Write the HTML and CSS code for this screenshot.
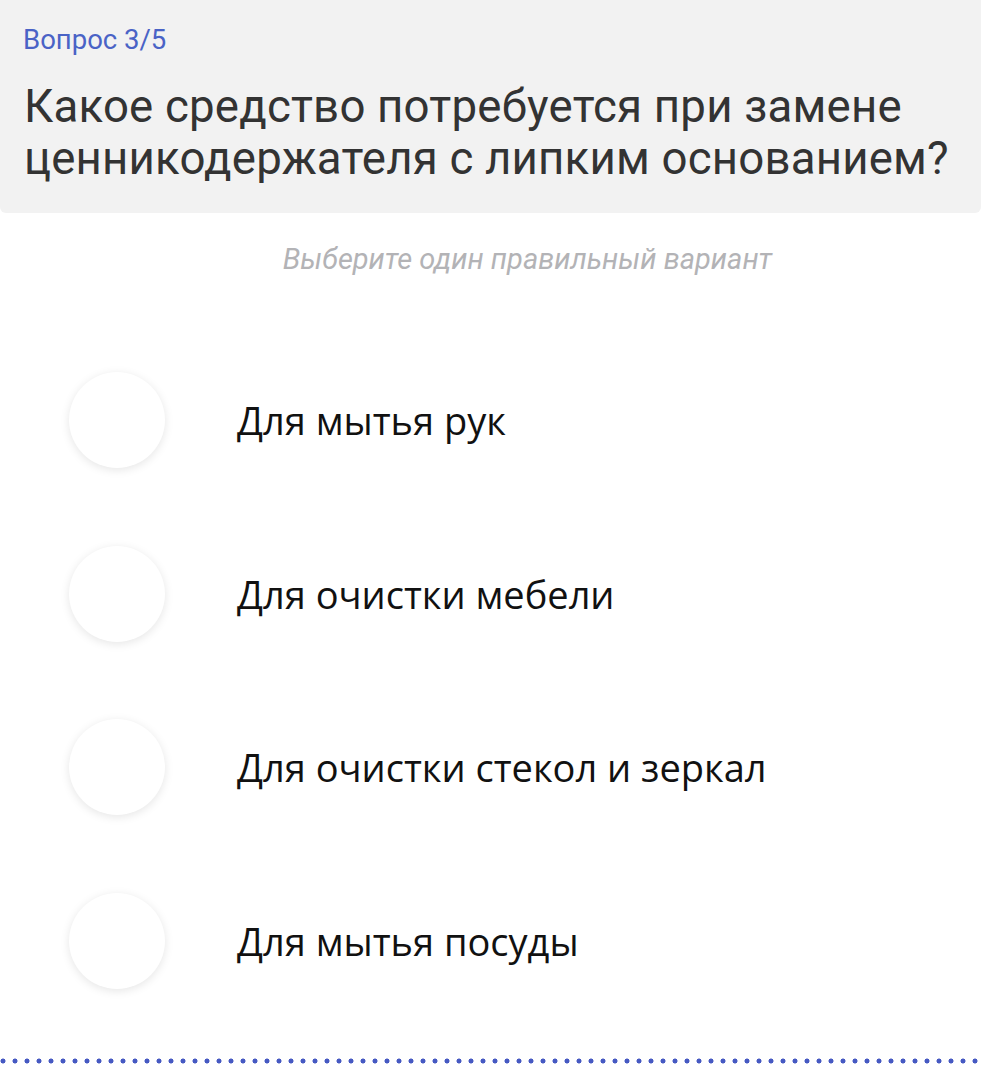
FILE: index.html
```html
<!DOCTYPE html>
<html lang="ru">
<head>
<meta charset="utf-8">
<link rel="stylesheet" href="styles.css">
</head>
<body>
<div class="page">
  <header class="head">
    <div class="counter">Вопрос 3/5</div>
    <h1 class="question">Какое средство потребуется при замене ценникодержателя с липким основанием?</h1>
  </header>
  <p class="hint">Выберите один правильный вариант</p>
  <ul class="options">
    <li class="option"><span class="radio"></span><span class="label">Для мытья рук</span></li>
    <li class="option"><span class="radio"></span><span class="label">Для очистки мебели</span></li>
    <li class="option"><span class="radio"></span><span class="label">Для очистки стекол и зеркал</span></li>
    <li class="option"><span class="radio"></span><span class="label">Для мытья посуды</span></li>
  </ul>
  <div class="dots"></div>
</div>
</body>
</html>
```
FILE: styles.css
```css
html, body {
  margin: 0;
  padding: 0;
  background: #ffffff;
}
.page {
  width: 981px;
  height: 1068px;
  position: relative;
  overflow: hidden;
  font-family: Roboto, "Noto Sans", sans-serif;
}
.head {
  background: #f2f2f2;
  height: 213px;
  box-sizing: border-box;
  padding: 22px 20px 0 23px;
  border-radius: 0 0 6px 6px;
}
.counter {
  font-size: 27.5px;
  line-height: 36px;
  color: #4a63c6;
}
.question {
  margin: 23px 0 0 1px;
  font-size: 45.6px;
  line-height: 52px;
  font-weight: 400;
  color: #333333;
  letter-spacing: 0.2px;
}
.hint {
  margin: 28px 0 0 0;
  padding-left: 74px;
  text-align: center;
  font-style: italic;
  font-size: 29px;
  line-height: 36px;
  color: #b3b3b6;
}
.options {
  list-style: none;
  margin: 95px 0 0 0;
  padding: 0 0 0 69px;
  display: flex;
  flex-direction: column;
  gap: 77.5px;
}
.option {
  display: flex;
  align-items: center;
  height: 96px;
}
.radio {
  width: 96px;
  height: 96px;
  border-radius: 50%;
  background: #ffffff;
  box-shadow: 0 2px 10px rgba(0, 0, 0, 0.10);
  flex: none;
}
.label {
  margin-left: 72px;
  font-family: "Open Sans", "Noto Sans", sans-serif;
  font-size: 38px;
  color: #111111;
}
.dots {
  position: absolute;
  left: 0;
  right: 0;
  top: 1058px;
  height: 6px;
  background-image: radial-gradient(circle, #4659c2 2.2px, transparent 2.8px);
  background-size: 12px 6px;
  background-position: -3px 0;
  background-repeat: repeat-x;
}
```
